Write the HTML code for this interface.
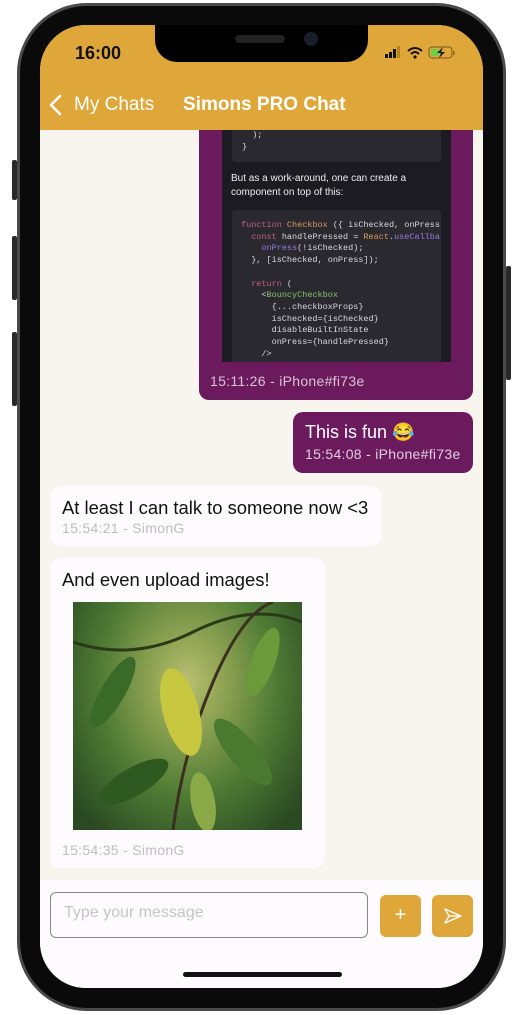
<!DOCTYPE html>
<html><head><meta charset="utf-8"><style>
*{margin:0;padding:0;box-sizing:border-box}
body{width:522px;height:1015px;background:#fff;position:relative;overflow:hidden;font-family:"Liberation Sans",sans-serif}
.abs{position:absolute}
.frame{left:17px;top:3px;width:489px;height:1008px;border-radius:70px;background:#0a0a0a;border:3px solid #4a4a4a}
.btn{background:#2a2a2a;border-radius:2px}
.screen{left:40px;top:25px;width:443px;height:963px;border-radius:46px;overflow:hidden;background:#f8f4ee}
.hdr{left:0;top:0;width:443px;height:105px;background:#dfa73a}
.notch{left:115px;top:0;width:213px;height:37px;background:#000;border-radius:0 0 22px 22px}
.code{font-family:"Liberation Mono",monospace;font-size:8.5px;line-height:11.7px;color:#d8d8e0;white-space:pre}
.ts{font-size:14px;letter-spacing:0.3px}
</style></head><body>
<div class="abs btn" style="left:12px;top:160px;width:5px;height:40px"></div>
<div class="abs btn" style="left:12px;top:236px;width:5px;height:64px"></div>
<div class="abs btn" style="left:12px;top:332px;width:5px;height:74px"></div>
<div class="abs btn" style="left:506px;top:266px;width:5px;height:114px"></div>
<div class="abs frame"></div>
<div class="abs screen">
 <div class="abs" style="left:159px;top:95px;width:274px;height:280px;background:#6b1a5e;border-radius:0 0 10px 10px"></div>
 <div class="abs" style="left:182px;top:105px;width:229px;height:232px;background:#1c1b22;overflow:hidden">
  <div class="abs" style="left:10px;top:0;width:209px;height:32px;background:#2a2930;border-radius:0 0 4px 4px"></div>
  <div class="abs code" style="left:20px;top:0">  );
}</div>
  <div class="abs" style="left:9px;top:42px;font-size:10px;line-height:14px;color:#eee">But as a work-around, one can create a<br>component on top of this:</div>
  <div class="abs" style="left:10px;top:80px;width:209px;height:160px;background:#2a2930;border-radius:4px"></div>
  <div class="abs code" style="left:19px;top:90px"><span style="color:#c0607a">function</span> <span style="color:#d99a5a">Checkbox</span> ({ isChecked, onPress
  <span style="color:#c0607a">const</span> handlePressed = <span style="color:#d99a5a">React</span>.<span style="color:#9a7ae0">useCallba</span>
    <span style="color:#9a7ae0">onPress</span>(!isChecked);
  }, [isChecked, onPress]);

  <span style="color:#c0607a">return</span> (
    &lt;<span style="color:#8ac06a">BouncyCheckbox</span>
      {...checkboxProps}
      isChecked={isChecked}
      disableBuiltInState
      onPress={handlePressed}
    /&gt;</div>
 </div>
 <div class="abs ts" style="left:170px;top:348px;color:#d9c5d5">15:11:26 - iPhone#fi73e</div>

 <div class="abs" style="left:253px;top:387px;width:180px;height:61px;background:#6b1a5e;border-radius:10px"></div>
 <div class="abs" style="left:265px;top:397px;font-size:18px;color:#fff">This is fun 😂</div>
 <div class="abs ts" style="left:265px;top:421px;color:#e0cde0">15:54:08 - iPhone#fi73e</div>

 <div class="abs" style="left:10px;top:461px;width:332px;height:60px;background:#fdfbfd;border-radius:10px"></div>
 <div class="abs" style="left:22px;top:472px;font-size:18.4px;color:#111">At least I can talk to someone now &lt;3</div>
 <div class="abs ts" style="left:22px;top:495px;color:#c0bcc0">15:54:21 - SimonG</div>

 <div class="abs" style="left:10px;top:533px;width:275px;height:310px;background:#fdfbfd;border-radius:10px"></div>
 <div class="abs" style="left:22px;top:544px;font-size:18.4px;color:#111">And even upload images!</div>
 <div class="abs" style="left:33px;top:577px;width:229px;height:228px;overflow:hidden;background:radial-gradient(ellipse at 50% 35%,#b8c070 0,#8aa050 25%,#4e7a34 55%,#2a4a22 90%)">
  <svg width="229" height="228" viewBox="0 0 229 228">
   <path d="M0 40 Q60 60 120 30 T229 20" stroke="#2a3a18" stroke-width="3" fill="none"/>
   <path d="M100 228 Q110 150 140 80 T200 0" stroke="#3a3020" stroke-width="3" fill="none"/>
   <ellipse cx="108" cy="110" rx="18" ry="45" fill="#c8c840" transform="rotate(-15 108 110)"/>
   <ellipse cx="40" cy="90" rx="12" ry="40" fill="#3a6a28" transform="rotate(30 40 90)"/>
   <ellipse cx="170" cy="150" rx="14" ry="42" fill="#4a7a30" transform="rotate(-40 170 150)"/>
   <ellipse cx="60" cy="180" rx="14" ry="40" fill="#2e5a22" transform="rotate(60 60 180)"/>
   <ellipse cx="190" cy="60" rx="12" ry="36" fill="#6a9a3a" transform="rotate(20 190 60)"/>
   <ellipse cx="130" cy="200" rx="12" ry="30" fill="#8aaa48" transform="rotate(-10 130 200)"/>
  </svg>
 </div>
 <div class="abs ts" style="left:22px;top:817px;color:#c0bcc0">15:54:35 - SimonG</div>

 <div class="abs" style="left:0;top:855px;width:443px;height:108px;background:#fdfbfd"></div>
 <div class="abs" style="left:10px;top:867px;width:318px;height:46px;border:1px solid #888;border-radius:6px;background:#fdfbfd"></div>
 <div class="abs" style="left:24px;top:879px;font-size:16px;color:#c8c4c8">Type your message</div>
 <div class="abs" style="left:340px;top:870px;width:41px;height:42px;background:#dfa73a;border-radius:6px;color:#fff;font-size:20px;text-align:center;line-height:40px">+</div>
 <div class="abs" style="left:392px;top:870px;width:41px;height:42px;background:#dfa73a;border-radius:6px"></div>
 <svg class="abs" style="left:403px;top:882px" width="20" height="18"><path d="M2 2 L18 9 L2 16 L6 9 Z M6 9 H18" stroke="#fff" stroke-width="1.3" fill="none" stroke-linejoin="round"/></svg>
 <div class="abs" style="left:143px;top:947px;width:159px;height:5px;border-radius:3px;background:#111"></div>

 <div class="abs hdr"></div>
 <div class="abs notch"></div>
 <div class="abs" style="left:195px;top:10px;width:50px;height:8px;border-radius:4px;background:#222"></div>
 <div class="abs" style="left:264px;top:7px;width:14px;height:14px;border-radius:7px;background:#1a1d2a"></div>
 <div class="abs" style="left:35px;top:18px;font-size:18px;font-weight:bold;color:#111">16:00</div>
 <svg class="abs" style="left:343px;top:20px" width="90" height="16" viewBox="0 0 90 16">
  <rect x="2" y="9" width="3" height="4" fill="#111"/><rect x="6" y="7" width="3" height="6" fill="#111"/><rect x="10" y="4" width="3" height="9" fill="#111"/><rect x="14" y="1" width="3" height="12" fill="#b48420"/>
  <path d="M25 6 Q32 0 39 6" stroke="#111" stroke-width="2" fill="none"/><path d="M28 9 Q32 5 36 9" stroke="#111" stroke-width="2" fill="none"/><circle cx="32" cy="12" r="1.6" fill="#111"/>
  <rect x="46" y="2" width="23" height="11" rx="3" fill="none" stroke="#8a6a20" stroke-width="1.2"/><rect x="48" y="4" width="8" height="7" fill="#6ad04a"/><path d="M60 2 L54 8 H58 L56 13 L62 7 H58 Z" fill="#111"/><rect x="70" y="6" width="1.5" height="4" fill="#8a6a20"/>
 </svg>
 <svg class="abs" style="left:8px;top:69px" width="14" height="22"><path d="M12 2 L3 11 L12 20" stroke="#fff" stroke-width="2.6" fill="none" stroke-linecap="round" stroke-linejoin="round"/></svg>
 <div class="abs" style="left:34px;top:69px;font-size:19px;color:#fff">My Chats</div>
 <div class="abs" style="left:143px;top:69px;font-size:19px;font-weight:bold;color:#fff">Simons PRO Chat</div>
</div>
</body></html>
